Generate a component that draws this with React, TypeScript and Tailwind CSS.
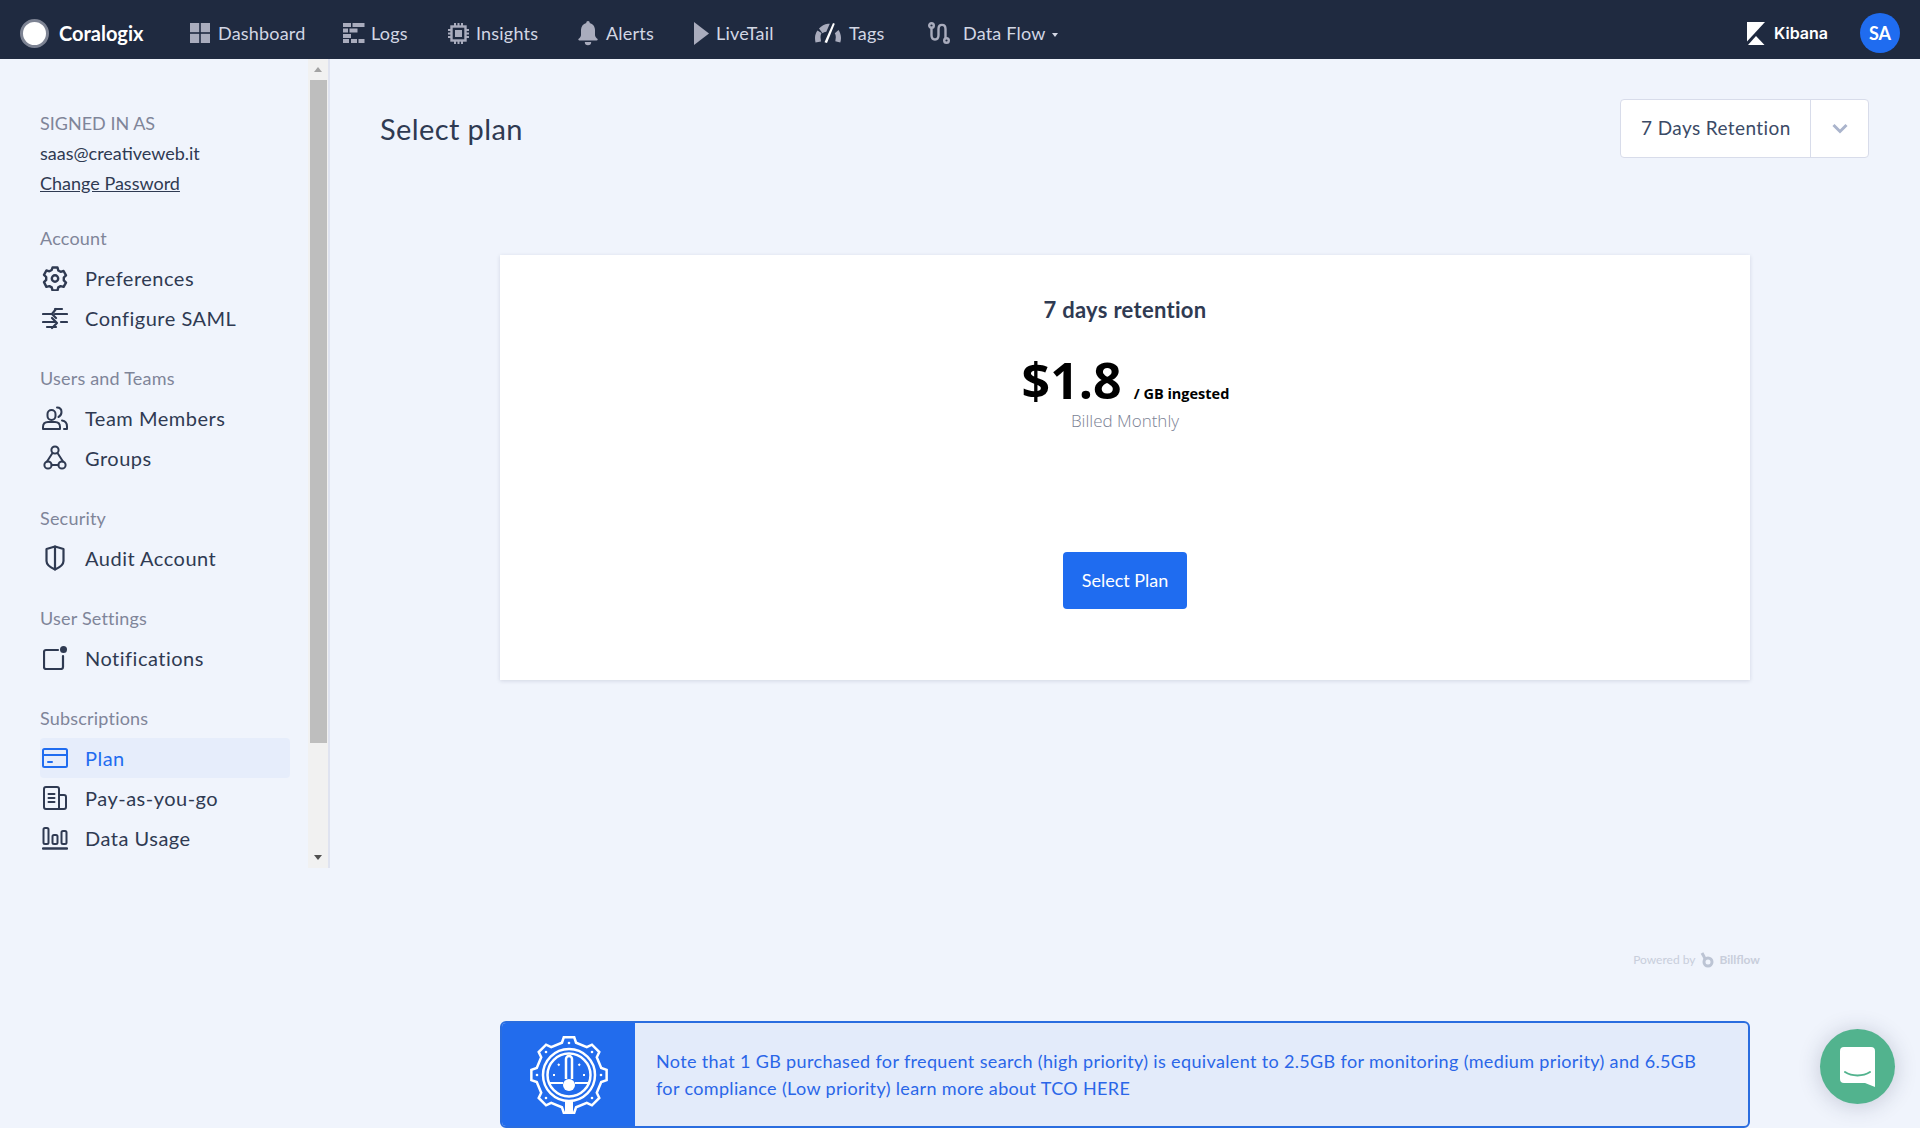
import type { ReactNode } from 'react';

const ui = { fontFamily: 'Lato, "Noto Sans", sans-serif' };

function DashboardIcon() {
  return (
    <svg width="20" height="20" viewBox="0 0 20 20" fill="#a9acbd">
      <rect x="0" y="0" width="9.2" height="9.2" />
      <rect x="10.8" y="0" width="9.2" height="9.2" />
      <rect x="0" y="10.8" width="9.2" height="9.2" />
      <rect x="10.8" y="10.8" width="9.2" height="9.2" />
    </svg>
  );
}

function LogsIcon() {
  return (
    <svg width="22" height="20" viewBox="0 0 22 20" fill="#a9acbd">
      <rect x="0" y="0" width="8" height="4" />
      <rect x="9.5" y="0" width="12" height="4" />
      <rect x="0" y="5.5" width="5" height="4" />
      <rect x="6.5" y="5.5" width="8" height="4" />
      <rect x="0" y="11" width="8" height="4" />
      <rect x="0" y="16" width="6" height="4" />
      <rect x="8" y="16" width="6" height="4" />
      <rect x="15.5" y="16" width="6" height="4" />
    </svg>
  );
}

function InsightsIcon() {
  return (
    <svg width="21" height="21" viewBox="0 0 21 21" fill="none" stroke="#a9acbd">
      <rect x="3.5" y="3.5" width="14" height="14" strokeWidth="2.4" />
      <rect x="7.5" y="7.5" width="6" height="6" fill="#a9acbd" strokeWidth="1" />
      <path d="M7 0v3M10.500 0v3M14 0v3M7 18v3M10.500 18v3M14 18v3M0 7h3M0 10.500h3M0 14h3M18 7h3M18 10.500h3M18 14h3" strokeWidth="2" />
    </svg>
  );
}

function BellIcon() {
  return (
    <svg width="20" height="25" viewBox="0 0 20 25" fill="#a9acbd">
      <path d="M10 0a1.700 1.700 0 0 1 1.700 1.900C15 2.800 17 5.600 17 9v5c0 1.600 1 2.700 2.300 3.700.7.600.4 1.700-.6 1.700H1.300c-1 0-1.300-1.100-.6-1.700C2 16.700 3 15.600 3 14V9c0-3.400 2-6.200 5.300-7.100A1.700 1.700 0 0 1 10 0z" />
      <path d="M6.800 21h6.400a3.200 3.200 0 0 1-6.400 0z" />
    </svg>
  );
}

function PlayIcon() {
  return (
    <svg width="15" height="23" viewBox="0 0 15 23" fill="#a9acbd">
      <path d="M0 0l15 11.500L0 23z" />
    </svg>
  );
}

function GaugeIcon() {
  return (
    <svg width="26" height="20" viewBox="0 0 26 20" fill="#a9acbd">
      <path d="M0 15c0-3 1-5.500 2.500-7.500L6.500 10c-.7 1.200-1 2.500-1 4l.5 4.500-5.500 1C.2 18 0 16.500 0 15z" />
      <path d="M4 5.500C6.500 2.800 9.500 1 13 .7l1.800 0-3.500 8c-1.600.1-2.800.6-3.800 1.500z" />
      <path d="M23.500 7c1.500 2.300 2.500 4.800 2.500 8 0 1.600-.2 3-.7 4.500l-5-1.300.5-4c0-1.500-.2-2.800-1-4z" />
      <path d="M18 0l1.800.8L12 20l-2.500-.8z" fill="#ffffff" />
    </svg>
  );
}

function FlowIcon() {
  return (
    <svg width="22" height="22" viewBox="0 0 22 22" fill="none" stroke="#a9acbd" strokeWidth="2.400" strokeLinecap="round">
      <circle cx="3.500" cy="3.500" r="2.300" />
      <circle cx="18.500" cy="18.500" r="2.300" />
      <path d="M3.500 6v7c0 6 7 6 7 0V7c0-5.500 7-5.500 7 0v9" />
    </svg>
  );
}

function KibanaIcon() {
  return (
    <svg width="18" height="23" viewBox="0 0 18 23" fill="#ffffff">
      <path d="M0 0h18L0 19.500z" />
      <path d="M1 23l8-9 8.500 9z" />
    </svg>
  );
}

const sideStroke = {
  fill: 'none',
  stroke: 'currentColor',
  strokeWidth: 2,
  strokeLinecap: 'round' as const,
  strokeLinejoin: 'round' as const,
};

function GearIcon() {
  return (
    <svg width="26" height="26" viewBox="0 0 26 26" {...sideStroke} strokeWidth={2.400}>
      <path d="M10.500 2.500h5l.8 3 2.300 1.300 3-.8 2.400 4.300-2.200 2.200v2.900l2.200 2.200-2.400 4.300-3-.8-2.300 1.300-.8 3h-5l-.8-3-2.300-1.300-3 .8L2 17.100l2.200-2.200V12L2 9.800l2.400-4.300 3 .8 2.300-1.300z" />
      <circle cx="13" cy="13.500" r="3.200" />
    </svg>
  );
}

function SwapIcon() {
  return (
    <svg width="26" height="24" viewBox="0 0 26 24" {...sideStroke}>
      <path d="M1 8h8M16 8h9M1 16h12M19 16h6M20 3h-6l-1 0M17 8h-4M14 3l-4 5 4 4" strokeWidth={2.200} />
      <path d="M5 21h9M10 12l5 5-5 5" strokeWidth={2.200} />
    </svg>
  );
}

function TeamIcon() {
  return (
    <svg width="26" height="24" viewBox="0 0 26 24" {...sideStroke}>
      <rect x="5.500" y="4" width="8" height="10" rx="4" />
      <path d="M1 23v-2c0-3 2-5 5-5h7c3 0 5 2 5 5v2z" />
      <path d="M15 1.500c3 0 4.500 2 4.500 4.500s-1 4-3 5M20 14.500c3 .5 5 2.500 5 6v2.500h-3" />
    </svg>
  );
}

function GroupIcon() {
  return (
    <svg width="24" height="26" viewBox="0 0 24 26" {...sideStroke}>
      <circle cx="12" cy="5" r="3.600" />
      <circle cx="5" cy="20" r="3.600" />
      <circle cx="19" cy="20" r="3.600" />
      <path d="M9.500 8L4 16.500M14.500 8L20 16.500M8.500 20h7" />
    </svg>
  );
}

function ShieldIcon() {
  return (
    <svg width="20" height="26" viewBox="0 0 20 26" {...sideStroke} strokeWidth={2.200}>
      <path d="M10 1.500l8.500 2.500v12c0 4-4 6.500-8.500 8.500-4.500-2-8.500-4.500-8.500-8.500V4z" />
      <path d="M10 1.500v23" />
    </svg>
  );
}

function NoticeIcon() {
  return (
    <svg width="24" height="24" viewBox="0 0 24 24" {...sideStroke} strokeWidth={2.200}>
      <path d="M15 4H3a2 2 0 0 0-2 2v15a2 2 0 0 0 2 2h15a2 2 0 0 0 2-2V10" />
      <circle cx="20.500" cy="3.500" r="3.500" fill="currentColor" stroke="none" />
    </svg>
  );
}

function CardIcon() {
  return (
    <svg width="26" height="20" viewBox="0 0 26 20" {...sideStroke}>
      <rect x="1" y="1" width="24" height="18" rx="1.500" />
      <path d="M1 7h24M6 14h4" />
    </svg>
  );
}

function PayIcon() {
  return (
    <svg width="24" height="24" viewBox="0 0 24 24" {...sideStroke}>
      <path d="M16 23H3a2 2 0 0 1-2-2V3a2 2 0 0 1 2-2h11a2 2 0 0 1 2 2zM16 9h5a2 2 0 0 1 2 2v10a2 2 0 0 1-2 2h-5" />
      <path d="M5.500 8h6M5.500 12h6M5.500 16h6" />
    </svg>
  );
}

function UsageIcon() {
  return (
    <svg width="26" height="24" viewBox="0 0 26 24" {...sideStroke}>
      <rect x="1.500" y="2" width="5" height="16" rx="1.500" />
      <rect x="10.500" y="9" width="5" height="9" rx="1.500" />
      <rect x="19.500" y="5" width="5" height="13" rx="1.500" />
      <path d="M1 22.500h24" strokeWidth={2.400} />
    </svg>
  );
}

function gearPath() {
  const teeth = 8;
  const pts: string[] = [];
  for (let i = 0; i < teeth; i++) {
    const a = (i * Math.PI * 2) / teeth - Math.PI / 2;
    const step = Math.PI / 2 / teeth;
    [
      [33, -1.100],
      [38, -0.700],
      [38, 0.700],
      [33, 1.100],
    ].forEach(([r, k]) => {
      const t = a + k * step;
      pts.push(`${(40 + r * Math.cos(t)).toFixed(2)} ${(40 + r * Math.sin(t)).toFixed(2)}`);
    });
  }
  return `M${pts.join('L')}Z`;
}

function BannerIcon() {
  return (
    <svg width="80" height="80" viewBox="0 0 80 80" fill="none" stroke="#ffffff" strokeWidth="2.500">
      <path d={gearPath()} />
      <circle cx="40" cy="40" r="26" strokeWidth="2.500" />
      <circle cx="40" cy="40" r="21.500" strokeWidth="2.500" />
      <path d="M20 48h14M46 48h14" strokeWidth="2" />
      <path d="M37 44V24a3 3 0 0 1 6 0v20" fill="#226ced" strokeWidth="2.500" />
      <circle cx="40" cy="50" r="6" fill="#ffffff" stroke="none" />
      <path d="M36 66v12h8V66" fill="#ffffff" stroke="none" />
      <path d="M40 23v0M24 40h2M54 40h2M29 29l1.500 1.500M51 29l-1.500 1.500" strokeWidth="2" />
      <circle cx="40" cy="8" r="1.300" fill="#ffffff" stroke="none" />
      <circle cx="8" cy="40" r="1.300" fill="#ffffff" stroke="none" />
      <circle cx="72" cy="40" r="1.300" fill="#ffffff" stroke="none" />
      <circle cx="17" cy="17" r="1.300" fill="#ffffff" stroke="none" />
      <circle cx="63" cy="17" r="1.300" fill="#ffffff" stroke="none" />
      <circle cx="17" cy="63" r="1.300" fill="#ffffff" stroke="none" />
      <circle cx="63" cy="63" r="1.300" fill="#ffffff" stroke="none" />
    </svg>
  );
}

function NavItem({ icon, label, gap, width }: { icon: ReactNode; label: string; gap: string; width: string }) {
  return (
    <div className={`flex items-center ${gap} ${width}`}>
      <span className="flex shrink-0 items-center">{icon}</span>
      <span className="whitespace-nowrap text-[18px] text-[#d3d7e4] tracking-[0.2px]">{label}</span>
    </div>
  );
}

function Section({ title, children }: { title: string; children: ReactNode }) {
  return (
    <div className="mt-5">
      <div className="flex h-10 items-center text-[18px] text-[#7f8599] tracking-[0.2px]">{title}</div>
      {children}
    </div>
  );
}

function SideRow({ icon, label, active }: { icon: ReactNode; label: string; active?: boolean }) {
  return (
    <div
      className={`flex h-10 w-[250px] items-center rounded-[4px] text-[20px] tracking-[0.5px] ${
        active ? 'bg-[#e6edfb] text-[#1f6cf0]' : 'text-[#2f3a52]'
      }`}
    >
      <span className="flex w-[30px] shrink-0 items-center justify-center">{icon}</span>
      <span className="ml-[15px] whitespace-nowrap">{label}</span>
    </div>
  );
}

function SidebarScrollbar() {
  return (
    <div className="flex w-[20px] shrink-0 flex-col items-center bg-[#f1f1f1]">
      <div className="flex h-[21px] items-center justify-center">
        <div className="h-0 w-0 border-x-[4px] border-b-[5px] border-x-transparent border-b-[#a3a3a3]" />
      </div>
      <div className="h-[663px] w-[17px] bg-[#bebebe]" />
      <div className="flex flex-1 items-end justify-center pb-[8px]">
        <div className="h-0 w-0 border-x-[4px] border-t-[5px] border-x-transparent border-t-[#505050]" />
      </div>
    </div>
  );
}

export default function App() {
  return (
    <div className="relative h-[1128px] w-[1920px] overflow-hidden bg-[#f0f4fc]" style={ui}>
      {/* Top bar */}
      <header className="flex h-[59px] items-center bg-[#1f2a40] pl-[20px] pr-[20px] pt-[7px]">
        <div className="flex w-[170px] items-center gap-[10px]">
          <span className="h-[29px] w-[29px] rounded-full border-[3px] border-[#7d8393] bg-white" />
          <span className="text-[20px] font-bold text-white">Coralogix</span>
        </div>
        <NavItem icon={<DashboardIcon />} label="Dashboard" gap="gap-[8px]" width="w-[153px]" />
        <NavItem icon={<LogsIcon />} label="Logs" gap="gap-[6px]" width="w-[105px]" />
        <NavItem icon={<InsightsIcon />} label="Insights" gap="gap-[7px]" width="w-[130px]" />
        <NavItem icon={<BellIcon />} label="Alerts" gap="gap-[8px]" width="w-[116px]" />
        <NavItem icon={<PlayIcon />} label="LiveTail" gap="gap-[7px]" width="w-[121px]" />
        <NavItem icon={<GaugeIcon />} label="Tags" gap="gap-[8px]" width="w-[113px]" />
        <NavItem icon={<FlowIcon />} label="Data Flow" gap="gap-[13px]" width="w-auto" />
        <span className="ml-[6px] mt-[4px] h-0 w-0 border-x-[3.500px] border-t-[4px] border-x-transparent border-t-[#d3d7e4]" />
        <div className="ml-auto flex items-center gap-[9px]">
          <KibanaIcon />
          <span className="text-[16px] font-semibold text-white" style={{ fontFamily: 'Inter, sans-serif' }}>
            Kibana
          </span>
        </div>
        <div className="ml-[32px] flex h-10 w-10 items-center justify-center rounded-full bg-[#1f6cf0] text-[18px] font-bold text-white">
          SA
        </div>
      </header>

      <div className="flex">
        {/* Sidebar */}
        <aside className="flex h-[809px] w-[330px] shrink-0 border-r-2 border-[#dfe3f0]">
          <div className="flex-1 pl-[40px] pt-[49px]">
            <div className="flex h-[30px] items-center text-[18px] text-[#7f8599]">SIGNED IN AS</div>
            <div className="flex h-[30px] items-center text-[18px] text-[#2f3a52]">saas@creativeweb.it</div>
            <div className="flex h-[30px] items-center text-[18px] text-[#2f3a52] underline">Change Password</div>
            <Section title="Account">
              <SideRow icon={<GearIcon />} label="Preferences" />
              <SideRow icon={<SwapIcon />} label="Configure SAML" />
            </Section>
            <Section title="Users and Teams">
              <SideRow icon={<TeamIcon />} label="Team Members" />
              <SideRow icon={<GroupIcon />} label="Groups" />
            </Section>
            <Section title="Security">
              <SideRow icon={<ShieldIcon />} label="Audit Account" />
            </Section>
            <Section title="User Settings">
              <SideRow icon={<NoticeIcon />} label="Notifications" />
            </Section>
            <Section title="Subscriptions">
              <SideRow icon={<CardIcon />} label="Plan" active />
              <SideRow icon={<PayIcon />} label="Pay-as-you-go" />
              <SideRow icon={<UsageIcon />} label="Data Usage" />
            </Section>
          </div>
          <SidebarScrollbar />
        </aside>

        {/* Main */}
        <main className="flex flex-1 flex-col items-center px-[50px] pt-[40px]">
          <div className="flex h-[59px] w-full items-center justify-between pr-px">
            <h1 className="text-[29px] tracking-[0.4px] text-[#2f3a52]">Select plan</h1>
            <div className="flex h-[59px] w-[249px] rounded-[4px] border border-[#d8dcea] bg-white text-[19px] tracking-[0.4px] text-[#3b4a66]">
              <div className="flex flex-1 items-center pl-[20px]">7 Days Retention</div>
              <div className="flex w-[58px] items-center justify-center border-l border-[#d8dcea]">
                <svg width="16" height="11" viewBox="0 0 16 11" fill="none" stroke="#aab4cc" strokeWidth="3">
                  <path d="M1.500 2L8 8.500 14.500 2" />
                </svg>
              </div>
            </div>
          </div>

          <section className="mt-[97px] flex h-[425px] w-[1250px] flex-col items-center bg-white pt-[38px] shadow-[0_1px_4px_rgba(40,50,90,0.15)]">
            <div className="text-[22px] font-bold tracking-[0.3px] text-[#2f3a52]">7 days retention</div>
            <div className="mt-[20px] flex items-baseline pl-px" style={{ fontFamily: '"Open Sans", sans-serif' }}>
              <span className="text-[50px] font-bold leading-[68px] text-black">$1.8</span>
              <span className="ml-[12px] text-[14.500px] font-bold text-black">/ GB ingested</span>
            </div>
            <div className="-mt-[6px] text-[17px] font-light text-[#7b8294]" style={{ fontFamily: '"Open Sans", sans-serif' }}>
              Billed Monthly
            </div>
            <button className="mt-[118px] h-[57px] w-[124px] rounded-[4px] bg-[#1f6cf0] text-[18px] text-white">
              Select Plan
            </button>
          </section>

          <div className="mt-[272px] flex h-[16px] w-[1250px] items-center justify-end gap-[5px] text-[12px] text-[#c8cedb]">
            <span className="-mr-[10px] flex items-center gap-[5px]">
              Powered by
              <svg width="14" height="16" viewBox="0 0 14 16" fill="none" stroke="#bcc4d4" strokeWidth="3">
                <circle cx="8" cy="10" r="4" />
                <path d="M2 1c1 2 2 3 3 6" />
              </svg>
              <span className="font-bold">Billflow</span>
            </span>
          </div>

          <div className="mt-[53px] flex h-[107px] w-[1250px] shrink-0 overflow-hidden rounded-[6px] border-2 border-[#2a6ddf] bg-[#e3ebfa]">
            <div className="flex w-[133px] shrink-0 items-center justify-center bg-[#226ced]">
              <BannerIcon />
            </div>
            <p className="ml-[21px] mr-[40px] self-center text-[18px] leading-[27px] tracking-[0.35px] text-[#2a66e8]">
              Note that 1 GB purchased for frequent search (high priority) is equivalent to 2.5GB for monitoring (medium priority) and 6.5GB for compliance (Low priority) learn more about TCO HERE
            </p>
          </div>
        </main>
      </div>

      {/* Chat launcher */}
      <div className="absolute left-[1820px] top-[1029px] flex h-[75px] w-[75px] items-center justify-center rounded-full bg-[#52b38e] shadow-[0_2px_22px_rgba(40,50,80,0.22)]">
        <svg width="35" height="40" viewBox="0 0 35 40" fill="#ffffff">
          <path d="M4 0h27a4 4 0 0 1 4 4v36l-10-4H4a4 4 0 0 1-4-4V4a4 4 0 0 1 4-4z" />
          <path d="M5 25c7 4.500 18 4.500 25 0" fill="none" stroke="#52b38e" strokeWidth="2" strokeLinecap="round" />
        </svg>
      </div>
    </div>
  );
}
